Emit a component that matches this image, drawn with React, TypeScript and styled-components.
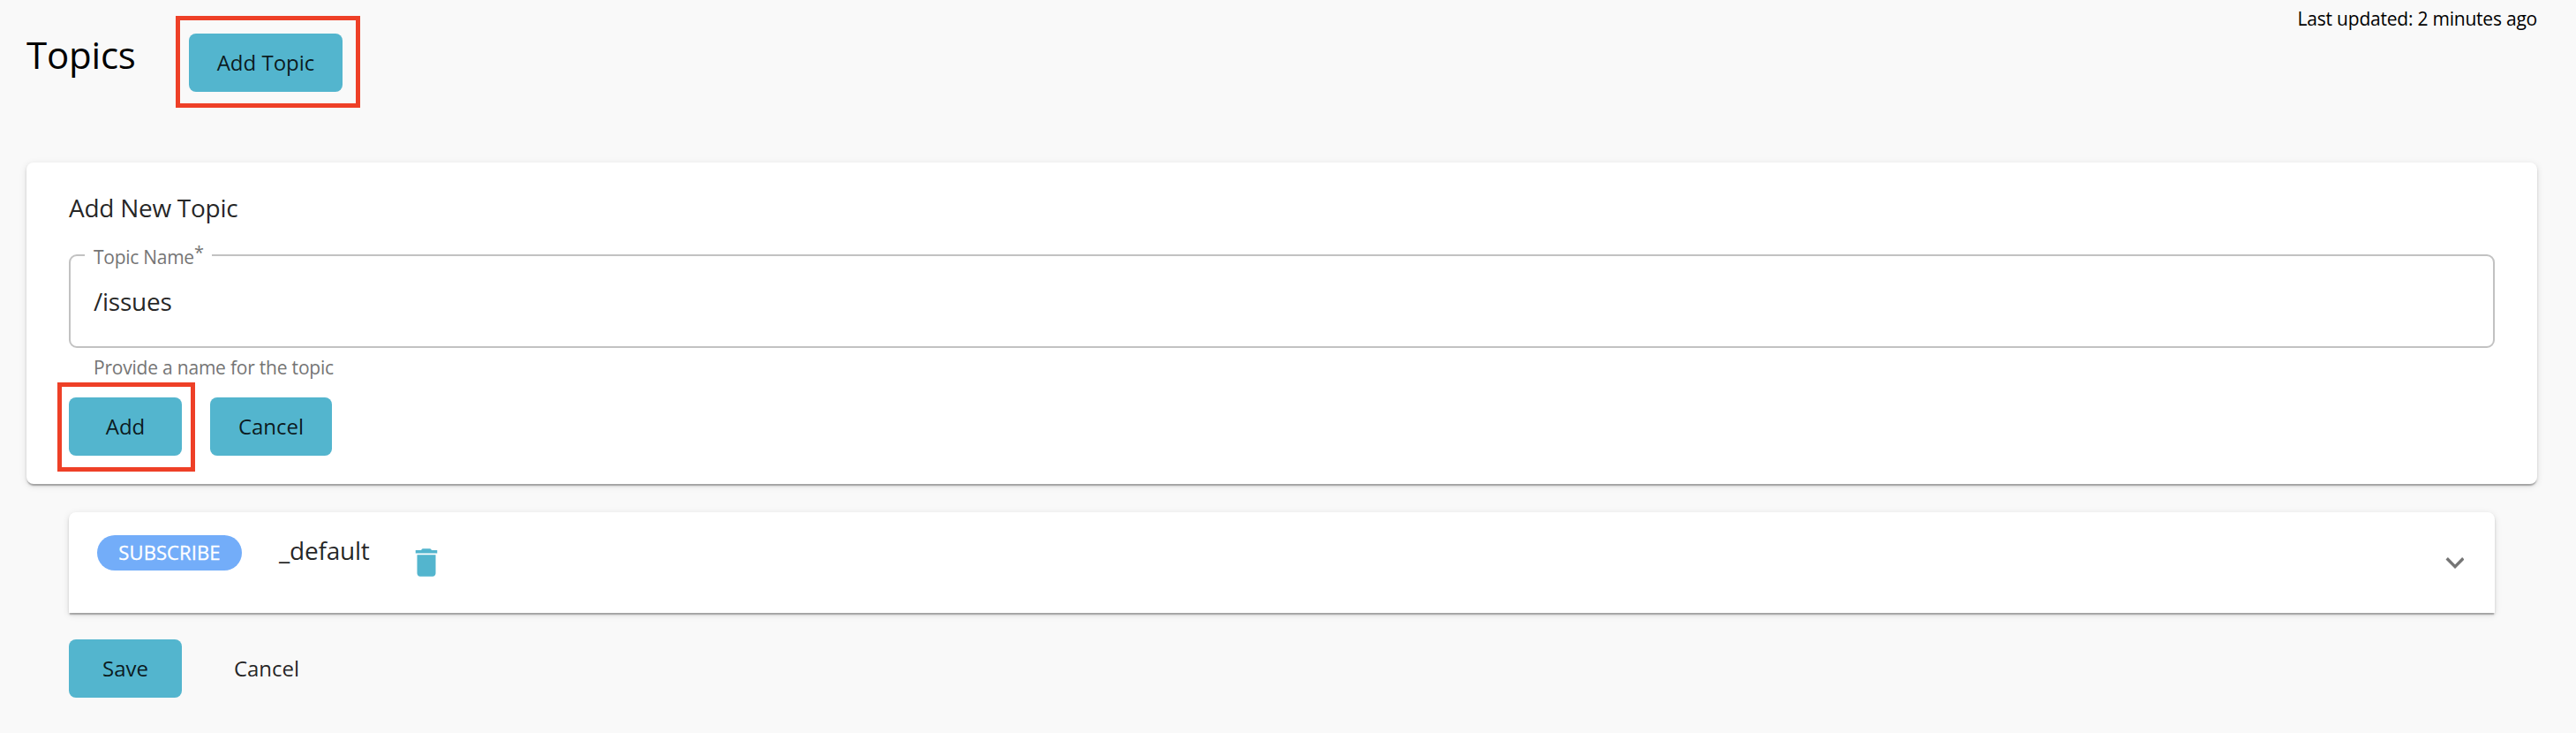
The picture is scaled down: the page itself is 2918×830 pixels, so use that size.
import React from 'react';
import styled, { createGlobalStyle, css } from 'styled-components';

const teal = '#53b5ce';

const elevation = css`
  box-shadow: 0 3px 1px -1px rgba(0, 0, 0, 0.2), 0 2px 3px rgba(0, 0, 0, 0.14),
    0 2px 8px rgba(0, 0, 0, 0.11);
`;

const GlobalStyle = createGlobalStyle`
  * { box-sizing: border-box; }
  body {
    margin: 0;
    background: #f9f9f9;
    font-family: 'Open Sans', 'Noto Sans', sans-serif;
    color: #000;
  }
`;

const Page = styled.main`
  min-height: 830px;
  padding: 0 44px 0 30px;
  background: #f9f9f9;
`;

const Header = styled.header`
  display: flex;
  align-items: flex-start;
  height: 184px;
`;

const Title = styled.h1`
  margin: 32px 0 0;
  width: 184px;
  font-size: 42px;
  letter-spacing: -0.2px;
  line-height: 60px;
  font-weight: 400;
`;

const HeaderAction = styled.div`
  margin-top: 38px;
`;

const LastUpdated = styled.span`
  margin-left: auto;
  font-size: 21px;
  letter-spacing: -0.22px;
  line-height: 42px;
`;

const Marked = styled.div<{ $inset: string }>`
  position: relative;
  display: flex;

  &::after {
    content: '';
    position: absolute;
    inset: ${(p) => p.$inset};
    border: 5px solid #ee4027;
    pointer-events: none;
  }
`;

const Button = styled.button<{ $width: number; $plain?: boolean }>`
  width: ${(p) => p.$width}px;
  height: 66px;
  padding: 0;
  border: 0;
  border-radius: 8px;
  background: ${(p) => (p.$plain ? 'transparent' : teal)};
  color: rgba(0, 0, 0, 0.87);
  font: 400 24px/66px 'Open Sans', 'Noto Sans', sans-serif;
  text-align: center;
`;

const Card = styled.section`
  height: 364px;
  padding: 31px 48px 0;
  border-radius: 8px;
  background: #fff;
  ${elevation}
`;

const CardTitle = styled.h2`
  margin: 0;
  font-size: 28px;
  letter-spacing: -0.27px;
  line-height: 40px;
  font-weight: 400;
  color: rgba(0, 0, 0, 0.87);
`;

const Field = styled.div`
  position: relative;
  height: 106px;
  margin-top: 33px;
  border: 2px solid #c2c2c2;
  border-radius: 9px;
`;

const FieldLabel = styled.label`
  position: absolute;
  left: 16px;
  top: -13px;
  width: 144px;
  height: 28px;
  padding-left: 10px;
  background: #fff;
  font-size: 21px;
  letter-spacing: -0.27px;
  line-height: 28px;
  white-space: nowrap;
  color: #757575;
`;

const Required = styled.span`
  position: relative;
  top: -6px;
  font-size: 20px;
  line-height: 1;
`;

const Input = styled.input`
  display: block;
  width: 100%;
  height: 40px;
  margin-top: 31px;
  padding: 0 26px;
  border: 0;
  outline: 0;
  background: transparent;
  color: rgba(0, 0, 0, 0.87);
  font: 400 28px/40px 'Open Sans', 'Noto Sans', sans-serif;
  letter-spacing: -0.25px;
`;

const Hint = styled.p`
  margin: 7px 0 0;
  padding-left: 28px;
  font-size: 21px;
  letter-spacing: -0.21px;
  line-height: 30px;
  color: #757575;
`;

const Actions = styled.div<{ $top: number; $gap: number }>`
  display: flex;
  gap: ${(p) => p.$gap}px;
  margin-top: ${(p) => p.$top}px;
`;

const Body = styled.div`
  padding: 32px 48px 0;
`;

const TopicPanel = styled.section`
  display: flex;
  align-items: flex-start;
  height: 114px;
  padding: 26px 35px 0 32px;
  border-radius: 8px 8px 0 0;
  background: #fff;
  ${elevation}
`;

const Chip = styled.span`
  width: 164px;
  height: 40px;
  border-radius: 20px;
  background: #73adf9;
  color: #fff;
  font-size: 22px;
  letter-spacing: 0.1px;
  line-height: 39px;
  font-weight: 500;
  -webkit-text-stroke: 0.3px #fff;
  text-align: center;
`;

const TopicName = styled.span`
  width: 146px;
  margin: -3px 0 0 42px;
  font-size: 28px;
  letter-spacing: -0.22px;
  line-height: 40px;
  color: rgba(0, 0, 0, 0.87);
`;

const TrashIcon = styled.svg`
  width: 42px;
  height: 42px;
  margin-top: 10px;
  fill: ${teal};
`;

const Chevron = styled.svg`
  width: 22px;
  height: 13px;
  margin: 25px 0 0 auto;
  fill: none;
  stroke: #757575;
  stroke-width: 3.4;
`;

export default function App() {
  return (
    <>
      <GlobalStyle />
      <Page>
        <Header>
          <Title>Topics</Title>
          <HeaderAction>
            <Marked $inset="-20px -20px -18px -15px">
              <Button $width={174}>Add Topic</Button>
            </Marked>
          </HeaderAction>
          <LastUpdated>Last updated: 2 minutes ago</LastUpdated>
        </Header>

        <Card>
          <CardTitle>Add New Topic</CardTitle>
          <Field>
            <FieldLabel htmlFor="topic-name">
              Topic Name<Required>*</Required>
            </FieldLabel>
            <Input id="topic-name" defaultValue="/issues" />
          </Field>
          <Hint>Provide a name for the topic</Hint>
          <Actions $top={19} $gap={32}>
            <Marked $inset="-17px -15px -18px -13px">
              <Button $width={128}>Add</Button>
            </Marked>
            <Button $width={138}>Cancel</Button>
          </Actions>
        </Card>

        <Body>
          <TopicPanel>
            <Chip>SUBSCRIBE</Chip>
            <TopicName>_default</TopicName>
            <TrashIcon viewBox="0 0 24 24">
              <path d="M6 19c0 1.1.9 2 2 2h8c1.1 0 2-.9 2-2V7H6v12zM19 4h-3.500l-1-1h-5l-1 1H5v2h14V4z" />
            </TrashIcon>
            <Chevron viewBox="0 0 22 13">
              <path d="M2.700 1.300L12 10.600L21.300 1.300" />
            </Chevron>
          </TopicPanel>
          <Actions $top={30} $gap={27}>
            <Button $width={128}>Save</Button>
            <Button $width={138} $plain>
              Cancel
            </Button>
          </Actions>
        </Body>
      </Page>
    </>
  );
}
